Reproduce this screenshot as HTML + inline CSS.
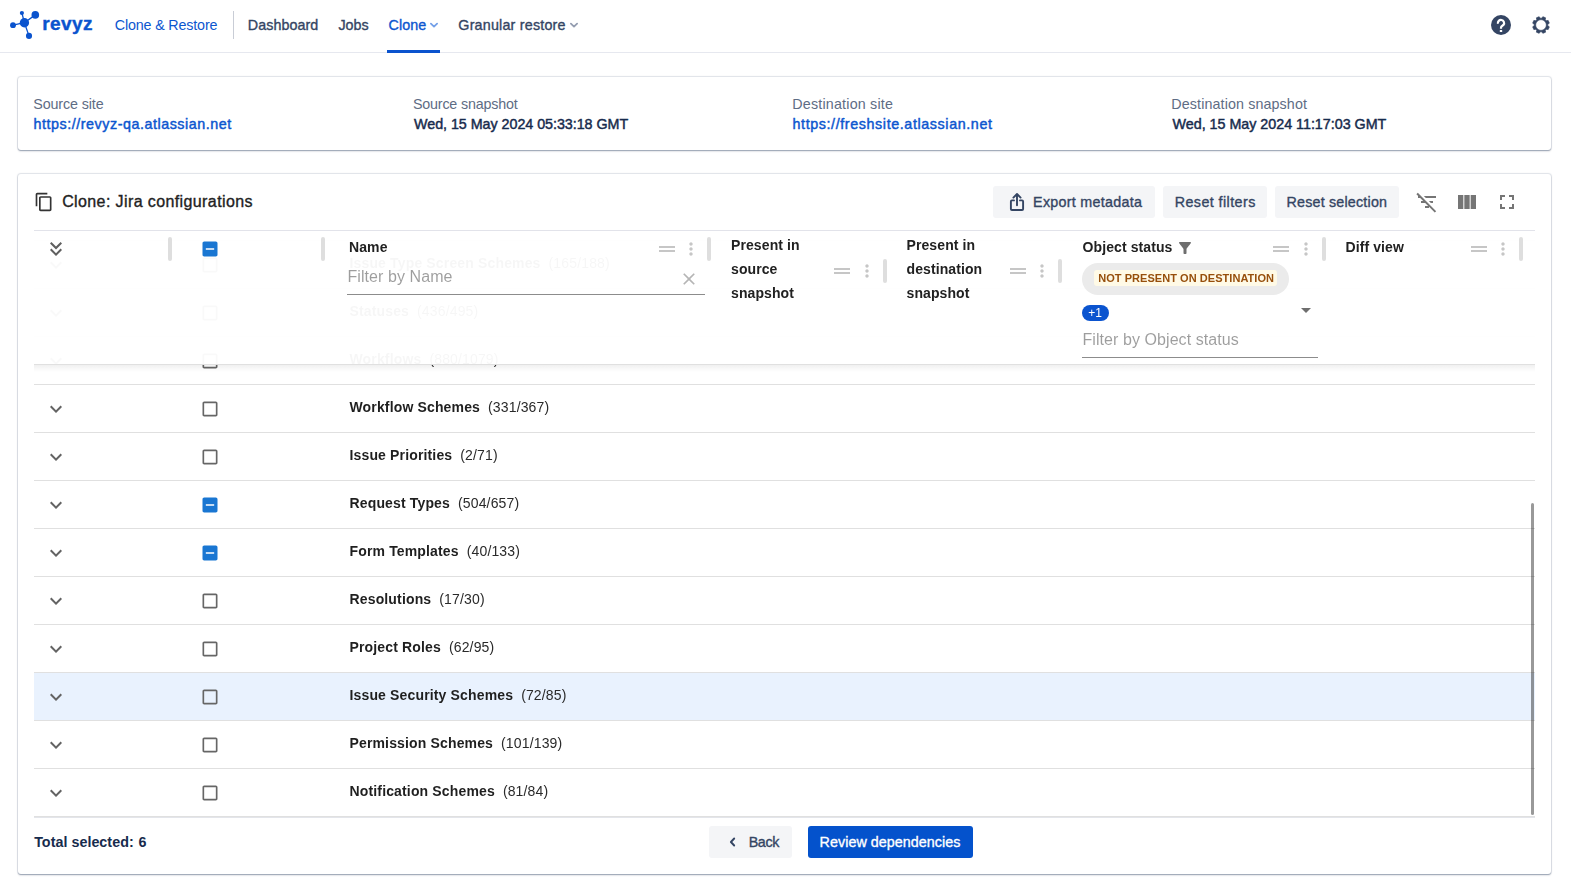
<!DOCTYPE html>
<html lang="en">
<head>
<meta charset="utf-8">
<title>Clone: Jira configurations</title>
<style>
*{box-sizing:border-box;margin:0;padding:0}
html,body{width:1571px;height:892px;overflow:hidden;background:#fff}
body{font-family:"Liberation Sans",sans-serif;color:#172b4d;position:relative;font-size:14px}
.abs{position:absolute}
svg{display:block}
/* NAV */
#nav{position:absolute;left:0;top:0;width:1571px;height:53px;border-bottom:1px solid #e6e8ef;background:#fff}
.nl{position:absolute;top:16px;font-size:14.3px;line-height:18px;color:#344563;white-space:nowrap;letter-spacing:-0.1px}
.nl.blue{color:#0c56cf}
.med{-webkit-text-stroke:.35px currentColor}
/* cards */
.card{position:absolute;left:18px;width:1533px;background:#fff;border-radius:3px;box-shadow:0 1px 1px rgba(9,30,66,.25),0 2px 2px rgba(9,30,66,.07),0 0 1px 1px rgba(9,30,66,.13)}
.lab{position:absolute;top:96px;font-size:14.3px;line-height:16px;color:#5e6c84;white-space:nowrap;letter-spacing:-0.15px}
.val{position:absolute;top:116px;font-size:14.3px;line-height:16px;color:#172b4d;white-space:nowrap;-webkit-text-stroke:.45px currentColor}
.val.link{color:#0c56cf}
/* toolbar */
.btn{position:absolute;top:186px;height:32px;background:#f4f5f7;border-radius:3px;font-size:14.3px;line-height:32px;color:#344563;white-space:nowrap;text-align:center;letter-spacing:-0.05px}
.ic{position:absolute;fill:#757575}
.btxt{top:194px;font-size:14.3px;line-height:16px;color:#344563;white-space:nowrap}
/* table */
#tbl{position:absolute;left:34px;top:230px;width:1501px;height:587px;overflow:hidden;border-top:1px solid #e2e3ea;will-change:transform}
.row{position:absolute;left:0;width:1501px;height:48px;border-bottom:1px solid #e0e0e0;background:#fff}
.row.hl{background:#e9f2fe}
.row .chev{position:absolute;left:10px;top:12px;width:24px;height:24px;fill:#636363}
.row .cb{position:absolute;left:166px;top:14px;width:20px;height:20px;fill:#666}
.row .cb.on{fill:#1976d2}
.row .nm{position:absolute;left:315.5px;top:13px;font-size:14px;line-height:18px;white-space:nowrap;color:#222}
.row .nm b{font-weight:bold;letter-spacing:.15px;color:#1f1f1f}
.row .nm span{margin-left:8px;letter-spacing:.15px;color:#2a2a2a}
#hdr{position:absolute;left:0;top:0;width:1501px;height:134px;background:rgba(255,255,255,.96);border-bottom:1px solid #e0e0e0}
#hsh{position:absolute;left:0;top:134px;width:1501px;height:7px;background:linear-gradient(rgba(0,0,0,.06),rgba(0,0,0,0))}
.hd{position:absolute;font-size:14px;font-weight:bold;line-height:24px;color:#212121;white-space:nowrap;letter-spacing:.1px}
.sep{position:absolute;width:4px;height:24px;border-radius:2px;background:#dedede}
.hic{position:absolute;fill:#c6c6c6}
.flt{position:absolute;font-size:16px;line-height:20px;color:#000;opacity:.38;white-space:nowrap;letter-spacing:.07px}
.ul{position:absolute;height:1px;background:#8c8c8c}
</style>
</head>
<body>
<div id="nav">
<svg class="abs" style="left:8px;top:8px" width="36" height="36" viewBox="8 8 36 36">
<g stroke="#0a53ce" stroke-width="1.3" fill="none" stroke-linecap="round">
<line x1="24.4" y1="22.7" x2="35.3" y2="14.9"/><line x1="24.4" y1="22.7" x2="21.9" y2="13"/><line x1="24.4" y1="22.7" x2="13" y2="25.2"/><line x1="24.4" y1="22.7" x2="29" y2="35.9"/>
</g>
<g fill="#0a53ce"><circle cx="24.4" cy="22.7" r="4.7"/><circle cx="35.3" cy="14.9" r="3.8"/><circle cx="21.9" cy="13" r="2.1"/><circle cx="13" cy="25.2" r="2.9"/><circle cx="29" cy="35.9" r="3.05"/></g>
</svg>
<div class="abs" style="left:42.28px;top:13px;font-size:19px;line-height:22px;font-weight:bold;color:#0a53ce;white-space:nowrap;-webkit-text-stroke:.4px #0a53ce;letter-spacing:0.424px">revyz</div>
<div class="nl blue" style="left:114.82px;letter-spacing:-0.16px">Clone &amp; Restore</div>
<div class="abs" style="left:233px;top:11px;width:1px;height:28px;background:#c9cdd6"></div>
<div class="nl med" style="left:247.79px;letter-spacing:0.075px">Dashboard</div>
<div class="nl med" style="left:338.46px;letter-spacing:-0.019px">Jobs</div>
<div class="nl blue med" style="left:388.61px;letter-spacing:0.055px">Clone</div>
<svg class="abs" style="left:429px;top:21px" width="10" height="8" viewBox="0 0 10 8"><path d="M1.9 2.7 5 5.6 8.1 2.7" fill="none" stroke="#74a0e8" stroke-width="1.8" stroke-linecap="round" stroke-linejoin="round"/></svg>
<div class="abs" style="left:387px;top:50px;width:53px;height:3px;background:#0a53ce"></div>
<div class="nl med" style="left:458.3px;letter-spacing:0.208px">Granular restore</div>
<svg class="abs" style="left:569px;top:21px" width="10" height="8" viewBox="0 0 10 8"><path d="M1.9 2.7 5 5.6 8.1 2.7" fill="none" stroke="#949db0" stroke-width="1.8" stroke-linecap="round" stroke-linejoin="round"/></svg>
<svg class="abs" style="left:1489px;top:13px" width="24" height="24" viewBox="0 0 24 24"><circle cx="12" cy="12" r="10" fill="#344563"/><path d="M8.95 10.7A3.1 3.1 0 1 1 14.55 11.8C13.6 13 12 13 12 14.8V15.7" fill="none" stroke="#fff" stroke-width="2.2" stroke-linejoin="round"/><rect x="10.8" y="16.9" width="2.4" height="2.2" rx=".3" fill="#fff"/></svg>
<svg class="abs" style="left:1528.6px;top:12.6px" width="24" height="24" viewBox="0 0 24 24"><path d="M18.76 12.71 L20.30 13.84 L19.17 16.57 L17.28 16.28 L16.28 17.28 L16.57 19.17 L13.84 20.30 L12.71 18.76 L11.29 18.76 L10.16 20.30 L7.43 19.17 L7.72 17.28 L6.72 16.28 L4.83 16.57 L3.70 13.84 L5.24 12.71 L5.24 11.29 L3.70 10.16 L4.83 7.43 L6.72 7.72 L7.72 6.72 L7.43 4.83 L10.16 3.70 L11.29 5.24 L12.71 5.24 L13.84 3.70 L16.57 4.83 L16.28 6.72 L17.28 7.72 L19.17 7.43 L20.30 10.16 L18.76 11.29Z M12 6.6a5.4 5.4 0 1 0 0 10.8a5.4 5.4 0 1 0 0-10.8Z" fill="#344563" fill-rule="evenodd" stroke="#344563" stroke-width=".7" stroke-linejoin="round"/></svg>
</div>
<div class="card" id="c1" style="top:77px;height:73px"></div>
<div class="lab" style="left:33.23px;letter-spacing:-0.109px">Source site</div>
<div class="val link" style="left:33.53px;letter-spacing:0.542px">https://revyz-qa.atlassian.net</div>
<div class="lab" style="left:412.88px;letter-spacing:-0.174px">Source snapshot</div>
<div class="val" style="left:414.05px;letter-spacing:-0.035px">Wed, 15 May 2024 05:33:18 GMT</div>
<div class="lab" style="left:792.31px;letter-spacing:0.19px">Destination site</div>
<div class="val link" style="left:792.53px;letter-spacing:0.607px">https://freshsite.atlassian.net</div>
<div class="lab" style="left:1171.35px;letter-spacing:0.108px">Destination snapshot</div>
<div class="val" style="left:1172.59px;letter-spacing:-0.012px">Wed, 15 May 2024 11:17:03 GMT</div>
<div class="card" id="c2" style="top:174px;height:700px"></div>
<svg class="abs" style="left:34px;top:192px;fill:#333" width="20" height="20" viewBox="0 0 24 24"><path d="M16 1H4c-1.1 0-2 .9-2 2v14h2V3h12V1zm3 4H8c-1.1 0-2 .9-2 2v14c0 1.1.9 2 2 2h11c1.1 0 2-.9 2-2V7c0-1.1-.9-2-2-2zm0 16H8V7h11v14z"/></svg>
<div class="abs med" style="left:62.15px;top:192px;font-size:16px;line-height:20px;color:#222;white-space:nowrap;letter-spacing:0.393px">Clone: Jira configurations</div>
<div class="btn" style="left:993px;width:162px"></div>
<svg class="abs" style="left:1005px;top:190px" width="24" height="24" viewBox="0 0 24 24"><g fill="none" stroke="#344563" stroke-width="1.9" stroke-linecap="round" stroke-linejoin="round"><path d="M9 10.4H6.9a1 1 0 0 0-1 1V19a1 1 0 0 0 1 1h10.2a1 1 0 0 0 1-1v-7.6a1 1 0 0 0-1-1H15"/><path d="M12 15.2V4.2M8.4 7.6 12 4l3.6 3.6"/></g></svg>
<div class="abs btxt med" style="left:1033.11px;letter-spacing:0.28px">Export metadata</div>
<div class="btn" style="left:1163px;width:104px"></div>
<div class="abs btxt med" style="left:1174.76px;letter-spacing:0.421px">Reset filters</div>
<div class="btn" style="left:1275px;width:124px"></div>
<div class="abs btxt med" style="left:1286.48px;letter-spacing:0.199px">Reset selection</div>
<svg class="ic" style="left:1415px;top:190px" width="24" height="24" viewBox="0 0 24 24"><path d="M10.83 8H21V6H8.83l2 2zm5 5H18v-2h-4.17l2 2zM14 16.83V18h-4v-2h3.17l-3-3H6v-2h2.17l-3-3H3V6h.17L1.39 4.22 2.8 2.81l18.38 18.38-1.41 1.41L14 16.83z"/></svg>
<svg class="ic" style="left:1455px;top:190px" width="24" height="24" viewBox="0 0 24 24"><path d="M14.67 5v14H9.33V5h5.34zm1 14H21V5h-5.33v14zm-7.34 0V5H3v14h5.33z"/></svg>
<svg class="ic" style="left:1495px;top:190px" width="24" height="24" viewBox="0 0 24 24"><path d="M7 14H5v5h5v-2H7v-3zm-2-4h2V7h3V5H5v5zm12 7h-3v2h5v-5h-2v3zM14 5v2h3v3h2V5h-5z"/></svg>
<div id="tbl">
<div class="row" style="top:-38px"></div>
<div class="row" style="top:10px"><svg class="chev" viewBox="0 0 24 24"><path d="M16.59 8.59 12 13.17 7.41 8.59 6 10l6 6 6-6z"/></svg><svg class="cb" viewBox="0 0 24 24"><path d="M19 5v14H5V5h14m0-2H5c-1.1 0-2 .9-2 2v14c0 1.1.9 2 2 2h14c1.1 0 2-.9 2-2V5c0-1.1-.9-2-2-2z"/></svg><div class="nm"><b>Issue Type Screen Schemes</b><span>(165/188)</span></div></div>
<div class="row" style="top:58px"><svg class="chev" viewBox="0 0 24 24"><path d="M16.59 8.59 12 13.17 7.41 8.59 6 10l6 6 6-6z"/></svg><svg class="cb" viewBox="0 0 24 24"><path d="M19 5v14H5V5h14m0-2H5c-1.1 0-2 .9-2 2v14c0 1.1.9 2 2 2h14c1.1 0 2-.9 2-2V5c0-1.1-.9-2-2-2z"/></svg><div class="nm"><b>Statuses</b><span>(436/495)</span></div></div>
<div class="row" style="top:106px"><svg class="chev" viewBox="0 0 24 24"><path d="M16.59 8.59 12 13.17 7.41 8.59 6 10l6 6 6-6z"/></svg><svg class="cb" viewBox="0 0 24 24"><path d="M19 5v14H5V5h14m0-2H5c-1.1 0-2 .9-2 2v14c0 1.1.9 2 2 2h14c1.1 0 2-.9 2-2V5c0-1.1-.9-2-2-2z"/></svg><div class="nm"><b>Workflows</b><span>(880/1079)</span></div></div>
<div class="row" style="top:154px"><svg class="chev" viewBox="0 0 24 24"><path d="M16.59 8.59 12 13.17 7.41 8.59 6 10l6 6 6-6z"/></svg><svg class="cb" viewBox="0 0 24 24"><path d="M19 5v14H5V5h14m0-2H5c-1.1 0-2 .9-2 2v14c0 1.1.9 2 2 2h14c1.1 0 2-.9 2-2V5c0-1.1-.9-2-2-2z"/></svg><div class="nm"><b>Workflow Schemes</b><span>(331/367)</span></div></div>
<div class="row" style="top:202px"><svg class="chev" viewBox="0 0 24 24"><path d="M16.59 8.59 12 13.17 7.41 8.59 6 10l6 6 6-6z"/></svg><svg class="cb" viewBox="0 0 24 24"><path d="M19 5v14H5V5h14m0-2H5c-1.1 0-2 .9-2 2v14c0 1.1.9 2 2 2h14c1.1 0 2-.9 2-2V5c0-1.1-.9-2-2-2z"/></svg><div class="nm"><b>Issue Priorities</b><span>(2/71)</span></div></div>
<div class="row" style="top:250px"><svg class="chev" viewBox="0 0 24 24"><path d="M16.59 8.59 12 13.17 7.41 8.59 6 10l6 6 6-6z"/></svg><svg class="cb on" viewBox="0 0 24 24"><path d="M19 3H5c-1.1 0-2 .9-2 2v14c0 1.1.9 2 2 2h14c1.1 0 2-.9 2-2V5c0-1.1-.9-2-2-2zm-2 10H7v-2h10v2z"/></svg><div class="nm"><b>Request Types</b><span>(504/657)</span></div></div>
<div class="row" style="top:298px"><svg class="chev" viewBox="0 0 24 24"><path d="M16.59 8.59 12 13.17 7.41 8.59 6 10l6 6 6-6z"/></svg><svg class="cb on" viewBox="0 0 24 24"><path d="M19 3H5c-1.1 0-2 .9-2 2v14c0 1.1.9 2 2 2h14c1.1 0 2-.9 2-2V5c0-1.1-.9-2-2-2zm-2 10H7v-2h10v2z"/></svg><div class="nm"><b>Form Templates</b><span>(40/133)</span></div></div>
<div class="row" style="top:346px"><svg class="chev" viewBox="0 0 24 24"><path d="M16.59 8.59 12 13.17 7.41 8.59 6 10l6 6 6-6z"/></svg><svg class="cb" viewBox="0 0 24 24"><path d="M19 5v14H5V5h14m0-2H5c-1.1 0-2 .9-2 2v14c0 1.1.9 2 2 2h14c1.1 0 2-.9 2-2V5c0-1.1-.9-2-2-2z"/></svg><div class="nm"><b>Resolutions</b><span>(17/30)</span></div></div>
<div class="row" style="top:394px"><svg class="chev" viewBox="0 0 24 24"><path d="M16.59 8.59 12 13.17 7.41 8.59 6 10l6 6 6-6z"/></svg><svg class="cb" viewBox="0 0 24 24"><path d="M19 5v14H5V5h14m0-2H5c-1.1 0-2 .9-2 2v14c0 1.1.9 2 2 2h14c1.1 0 2-.9 2-2V5c0-1.1-.9-2-2-2z"/></svg><div class="nm"><b>Project Roles</b><span>(62/95)</span></div></div>
<div class="row hl" style="top:442px"><svg class="chev" viewBox="0 0 24 24"><path d="M16.59 8.59 12 13.17 7.41 8.59 6 10l6 6 6-6z"/></svg><svg class="cb" viewBox="0 0 24 24"><path d="M19 5v14H5V5h14m0-2H5c-1.1 0-2 .9-2 2v14c0 1.1.9 2 2 2h14c1.1 0 2-.9 2-2V5c0-1.1-.9-2-2-2z"/></svg><div class="nm"><b>Issue Security Schemes</b><span>(72/85)</span></div></div>
<div class="row" style="top:490px"><svg class="chev" viewBox="0 0 24 24"><path d="M16.59 8.59 12 13.17 7.41 8.59 6 10l6 6 6-6z"/></svg><svg class="cb" viewBox="0 0 24 24"><path d="M19 5v14H5V5h14m0-2H5c-1.1 0-2 .9-2 2v14c0 1.1.9 2 2 2h14c1.1 0 2-.9 2-2V5c0-1.1-.9-2-2-2z"/></svg><div class="nm"><b>Permission Schemes</b><span>(101/139)</span></div></div>
<div class="row" style="top:538px"><svg class="chev" viewBox="0 0 24 24"><path d="M16.59 8.59 12 13.17 7.41 8.59 6 10l6 6 6-6z"/></svg><svg class="cb" viewBox="0 0 24 24"><path d="M19 5v14H5V5h14m0-2H5c-1.1 0-2 .9-2 2v14c0 1.1.9 2 2 2h14c1.1 0 2-.9 2-2V5c0-1.1-.9-2-2-2z"/></svg><div class="nm"><b>Notification Schemes</b><span>(81/84)</span></div></div>
<div id="hdr">
<svg class="abs" style="left:10px;top:6px;fill:#5f5f5f" width="24" height="24" viewBox="0 0 24 24"><path d="M18 6.41 16.59 5 12 9.58 7.41 5 6 6.41l6 6z"/><path d="m18 13-1.41-1.41L12 16.17l-4.59-4.58L6 13l6 6z"/></svg>
<div class="sep" style="left:134px;top:6px"></div>
<svg class="abs" style="left:166px;top:8px;fill:#1976d2" width="20" height="20" viewBox="0 0 24 24"><path d="M19 3H5c-1.1 0-2 .9-2 2v14c0 1.1.9 2 2 2h14c1.1 0 2-.9 2-2V5c0-1.1-.9-2-2-2zm-2 10H7v-2h10v2z"/></svg>
<div class="sep" style="left:287px;top:6px"></div>
<div class="hd" style="left:315px;top:4px">Name</div>
<svg class="hic" style="left:621px;top:6px" width="24" height="24" viewBox="0 0 24 24"><path d="M20 9H4v2h16V9zM4 15h16v-2H4v2z"/></svg><svg class="hic" style="left:647px;top:8px" width="20" height="20" viewBox="0 0 24 24"><path d="M12 8c1.1 0 2-.9 2-2s-.9-2-2-2-2 .9-2 2 .9 2 2 2zm0 2c-1.1 0-2 .9-2 2s.9 2 2 2 2-.9 2-2-.9-2-2-2zm0 6c-1.1 0-2 .9-2 2s.9 2 2 2 2-.9 2-2-.9-2-2-2z"/></svg><div class="sep" style="left:673px;top:6px"></div>
<div class="flt" style="left:313.5px;top:36px">Filter by Name</div>
<svg class="abs" style="left:645px;top:38px;fill:#b5b5b5" width="20" height="20" viewBox="0 0 24 24"><path d="M19 6.41 17.59 5 12 10.59 6.41 5 5 6.41 10.59 12 5 17.59 6.41 19 12 13.41 17.59 19 19 17.59 13.41 12z"/></svg>
<div class="ul" style="left:313px;top:63px;width:358px"></div>
<div class="hd" style="left:697px;top:1.7px">Present in<br>source<br>snapshot</div>
<svg class="hic" style="left:796px;top:28px" width="24" height="24" viewBox="0 0 24 24"><path d="M20 9H4v2h16V9zM4 15h16v-2H4v2z"/></svg><svg class="hic" style="left:823px;top:30px" width="20" height="20" viewBox="0 0 24 24"><path d="M12 8c1.1 0 2-.9 2-2s-.9-2-2-2-2 .9-2 2 .9 2 2 2zm0 2c-1.1 0-2 .9-2 2s.9 2 2 2 2-.9 2-2-.9-2-2-2zm0 6c-1.1 0-2 .9-2 2s.9 2 2 2 2-.9 2-2-.9-2-2-2z"/></svg><div class="sep" style="left:849px;top:28px"></div>
<div class="hd" style="left:872.5px;top:1.7px">Present in<br>destination<br>snapshot</div>
<svg class="hic" style="left:972px;top:28px" width="24" height="24" viewBox="0 0 24 24"><path d="M20 9H4v2h16V9zM4 15h16v-2H4v2z"/></svg><svg class="hic" style="left:998px;top:30px" width="20" height="20" viewBox="0 0 24 24"><path d="M12 8c1.1 0 2-.9 2-2s-.9-2-2-2-2 .9-2 2 .9 2 2 2zm0 2c-1.1 0-2 .9-2 2s.9 2 2 2 2-.9 2-2-.9-2-2-2zm0 6c-1.1 0-2 .9-2 2s.9 2 2 2 2-.9 2-2-.9-2-2-2z"/></svg><div class="sep" style="left:1024px;top:28px"></div>
<div class="hd" style="left:1048.5px;top:4px">Object status</div>
<svg class="abs" style="left:1142px;top:8px;fill:#6e6e6e" width="18" height="18" viewBox="0 0 24 24"><path d="M4.25 5.61C6.27 8.2 10 13 10 13v6c0 .55.45 1 1 1h2c.55 0 1-.45 1-1v-6s3.72-4.8 5.74-7.39c.51-.66.04-1.61-.79-1.61H5.04c-.83 0-1.3.95-.79 1.61z"/></svg>
<svg class="hic" style="left:1235px;top:6px" width="24" height="24" viewBox="0 0 24 24"><path d="M20 9H4v2h16V9zM4 15h16v-2H4v2z"/></svg><svg class="hic" style="left:1262px;top:8px" width="20" height="20" viewBox="0 0 24 24"><path d="M12 8c1.1 0 2-.9 2-2s-.9-2-2-2-2 .9-2 2 .9 2 2 2zm0 2c-1.1 0-2 .9-2 2s.9 2 2 2 2-.9 2-2-.9-2-2-2zm0 6c-1.1 0-2 .9-2 2s.9 2 2 2 2-.9 2-2-.9-2-2-2z"/></svg><div class="sep" style="left:1288px;top:6px"></div>
<div class="abs" style="left:1048px;top:32px;width:207px;height:32px;border-radius:16px;background:#ebebeb"></div>
<div class="abs" style="left:1060px;top:39px;width:183px;height:16px;border-radius:3px;background:#fffae6"></div>
<div class="abs" style="left:1064.28px;top:40px;font-size:11px;line-height:14px;font-weight:bold;color:#974f0c;white-space:nowrap;letter-spacing:0.046px">NOT PRESENT ON DESTINATION</div>
<div class="abs" style="left:1048px;top:74px;width:27px;height:16px;border-radius:8px;background:#0b54cf"></div>
<div class="abs" style="left:1054.2px;top:75px;font-size:12px;line-height:14px;color:#fff;white-space:nowrap">+1</div>
<svg class="abs" style="left:1260px;top:67px;fill:#6e6e6e" width="24" height="24" viewBox="0 0 24 24"><path d="M7 10l5 5 5-5z"/></svg>
<div class="flt" style="left:1048.5px;top:99px">Filter by Object status</div>
<div class="ul" style="left:1048px;top:126px;width:236px"></div>
<div class="hd" style="left:1311.5px;top:4px">Diff view</div>
<svg class="hic" style="left:1433px;top:6px" width="24" height="24" viewBox="0 0 24 24"><path d="M20 9H4v2h16V9zM4 15h16v-2H4v2z"/></svg><svg class="hic" style="left:1459px;top:8px" width="20" height="20" viewBox="0 0 24 24"><path d="M12 8c1.1 0 2-.9 2-2s-.9-2-2-2-2 .9-2 2 .9 2 2 2zm0 2c-1.1 0-2 .9-2 2s.9 2 2 2 2-.9 2-2-.9-2-2-2zm0 6c-1.1 0-2 .9-2 2s.9 2 2 2 2-.9 2-2-.9-2-2-2z"/></svg><div class="sep" style="left:1485px;top:6px"></div>
</div>
<div id="hsh"></div>
</div>
<div class="abs" style="left:34px;top:817px;width:1501px;height:1px;background:#e3e5ea"></div>
<div class="abs" style="left:1531px;top:503px;width:3px;height:312px;border-radius:1.5px;background:rgba(0,0,0,.4)"></div>
<div class="abs" style="left:34.17px;top:834px;font-size:14.3px;line-height:16px;font-weight:bold;color:#172b4d;white-space:nowrap;letter-spacing:0.033px">Total selected:</div>
<div class="abs" style="left:138.6px;top:834px;font-size:14.3px;line-height:16px;font-weight:bold;color:#172b4d;white-space:nowrap">6</div>
<div class="btn" style="left:709px;top:826px;width:83px"></div>
<svg class="abs" style="left:727px;top:836px" width="12" height="12" viewBox="0 0 12 12"><path d="M7.2 2.5 3.9 6l3.3 3.5" fill="none" stroke="#344563" stroke-width="1.9" stroke-linecap="round" stroke-linejoin="round"/></svg>
<div class="abs btxt med" style="left:748.66px;top:834px;letter-spacing:-0.336px">Back</div>
<div class="abs" style="left:808px;top:826px;width:165px;height:32px;border-radius:3px;background:#0452cc"></div>
<div class="abs btxt med" style="left:819.59px;top:834px;color:#fff;letter-spacing:0.05px">Review dependencies</div>
</body>
</html>
